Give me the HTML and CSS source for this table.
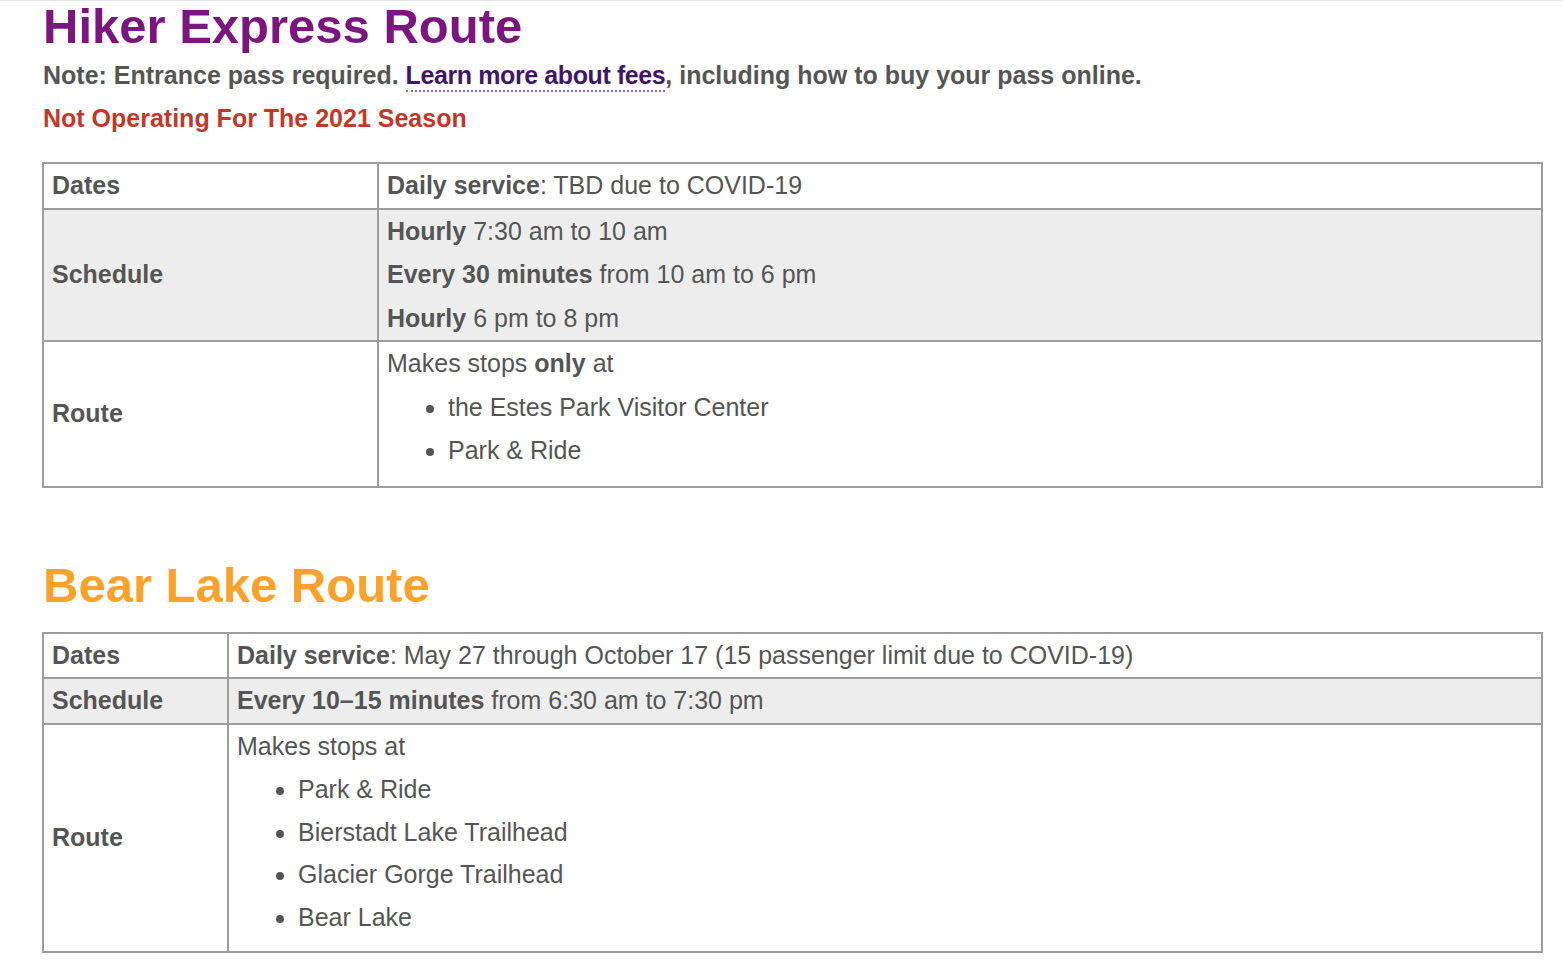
FILE: index.html
```html
<!DOCTYPE html>
<html lang="en">
<head>
<meta charset="utf-8">
<title>Shuttle Routes</title>
<link rel="stylesheet" href="styles.css">
</head>
<body>
<main class="page">
  <section class="route">
    <h1 class="route-title hiker">Hiker Express Route</h1>
    <p class="note">Note: Entrance pass required. <a class="fee-link" href="#">Learn more about fees</a>, including how to buy your pass online.</p>
    <p class="status">Not Operating For The 2021 Season</p>
    <table class="info info-hiker">
      <colgroup><col class="label-col"><col></colgroup>
      <tbody>
        <tr>
          <th>Dates</th>
          <td><strong>Daily service</strong>: TBD due to COVID-19</td>
        </tr>
        <tr class="shade">
          <th>Schedule</th>
          <td>
            <p><strong>Hourly</strong> 7:30 am to 10 am</p>
            <p><strong>Every 30 minutes</strong> from 10 am to 6 pm</p>
            <p><strong>Hourly</strong> 6 pm to 8 pm</p>
          </td>
        </tr>
        <tr>
          <th>Route</th>
          <td>
            <p>Makes stops <strong>only</strong> at</p>
            <ul>
              <li>the Estes Park Visitor Center</li>
              <li>Park &amp; Ride</li>
            </ul>
          </td>
        </tr>
      </tbody>
    </table>
  </section>

  <section class="route bear-section">
    <h2 class="route-title bear">Bear Lake Route</h2>
    <table class="info info-bear">
      <colgroup><col class="label-col"><col></colgroup>
      <tbody>
        <tr>
          <th>Dates</th>
          <td><strong>Daily service</strong>: May 27 through October 17 (15 passenger limit due to COVID-19)</td>
        </tr>
        <tr class="shade">
          <th>Schedule</th>
          <td><strong>Every 10–15 minutes</strong> from 6:30 am to 7:30 pm</td>
        </tr>
        <tr>
          <th>Route</th>
          <td>
            <p>Makes stops at</p>
            <ul>
              <li>Park &amp; Ride</li>
              <li>Bierstadt Lake Trailhead</li>
              <li>Glacier Gorge Trailhead</li>
              <li>Bear Lake</li>
            </ul>
          </td>
        </tr>
      </tbody>
    </table>
  </section>
</main>
</body>
</html>
```

FILE: styles.css
```css
html, body {
  margin: 0;
  padding: 0;
  background: #ffffff;
}

body {
  font-family: "Liberation Sans", Arial, Helvetica, sans-serif;
  color: #555555;
  border-top: 1px solid #e6e6e6;
}

.page {
  padding: 0 20px 0 42px;
}

.route-title {
  margin: 0;
  padding-left: 1px;
  font-size: 49px;
  line-height: 52px;
  font-weight: 700;
}

.hiker {
  color: #7c167f;
  margin-top: -1px;
}

.bear {
  color: #fba22c;
}

.note,
.status {
  margin: 0;
  padding-left: 1px;
  font-size: 25px;
  line-height: 43px;
  font-weight: 700;
}

.note {
  margin-top: 2px;
}

.status {
  color: #c0392b;
  margin-bottom: 22px;
}

.fee-link {
  color: #3f1768;
  text-decoration: none;
  letter-spacing: -0.4px;
  padding-bottom: 1px;
  border-bottom: 2px dotted #9560c4;
}

.info {
  width: 1501px;
  border-collapse: collapse;
  table-layout: fixed;
  font-size: 25px;
  line-height: 43.5px;
}

.info-hiker .label-col {
  width: 335px;
}

.info-bear .label-col {
  width: 185px;
}

.info th,
.info td {
  border: 2px solid #9d9d9d;
  padding: 0 8px;
  vertical-align: middle;
  text-align: left;
}

.info th {
  font-weight: 700;
}

.info td {
  font-weight: 400;
}

.info strong {
  font-weight: 700;
}

.shade th,
.shade td {
  background: #ededed;
}

.info p {
  margin: 0;
}

.info ul {
  margin: 0 0 13px;
  padding-left: 61px;
  list-style: disc;
}

.info-bear ul {
  line-height: 42.5px;
  margin-bottom: 13px;
}

.bear-section {
  margin-top: 71px;
}

.info-bear {
  margin-top: 21px;
}
```
